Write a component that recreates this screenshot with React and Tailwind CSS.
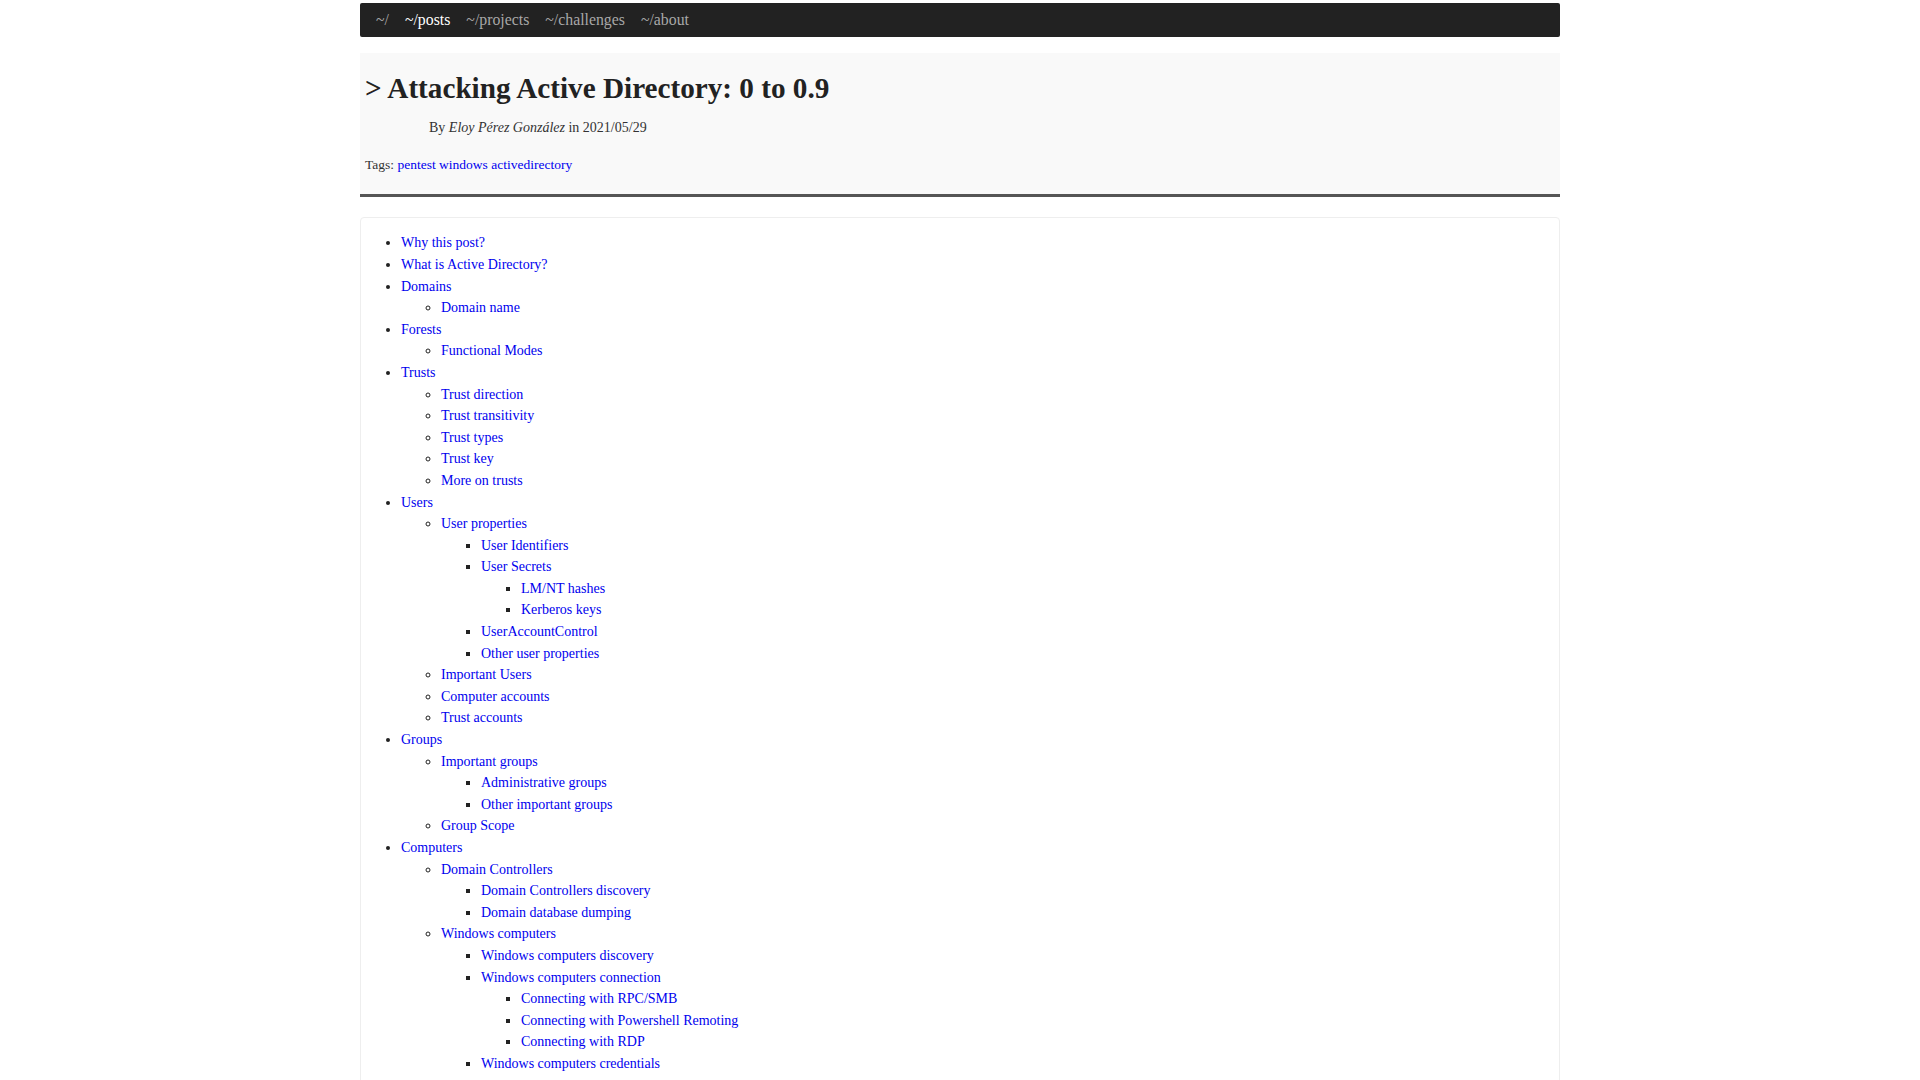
const NAV = [
  { label: '~/', active: false },
  { label: '~/posts', active: true },
  { label: '~/projects', active: false },
  { label: '~/challenges', active: false },
  { label: '~/about', active: false },
];

// table of contents, nested by level
const TOC = [
  { t: 'Why this post?' },
  { t: 'What is Active Directory?' },
  { t: 'Domains', c: [{ t: 'Domain name' }] },
  { t: 'Forests', c: [{ t: 'Functional Modes' }] },
  {
    t: 'Trusts',
    c: [
      { t: 'Trust direction' },
      { t: 'Trust transitivity' },
      { t: 'Trust types' },
      { t: 'Trust key' },
      { t: 'More on trusts' },
    ],
  },
  {
    t: 'Users',
    c: [
      {
        t: 'User properties',
        c: [
          { t: 'User Identifiers' },
          { t: 'User Secrets', c: [{ t: 'LM/NT hashes' }, { t: 'Kerberos keys' }] },
          { t: 'UserAccountControl' },
          { t: 'Other user properties' },
        ],
      },
      { t: 'Important Users' },
      { t: 'Computer accounts' },
      { t: 'Trust accounts' },
    ],
  },
  {
    t: 'Groups',
    c: [
      {
        t: 'Important groups',
        c: [{ t: 'Administrative groups' }, { t: 'Other important groups' }],
      },
      { t: 'Group Scope' },
    ],
  },
  {
    t: 'Computers',
    c: [
      {
        t: 'Domain Controllers',
        c: [{ t: 'Domain Controllers discovery' }, { t: 'Domain database dumping' }],
      },
      {
        t: 'Windows computers',
        c: [
          { t: 'Windows computers discovery' },
          {
            t: 'Windows computers connection',
            c: [
              { t: 'Connecting with RPC/SMB' },
              { t: 'Connecting with Powershell Remoting' },
              { t: 'Connecting with RDP' },
            ],
          },
          { t: 'Windows computers credentials' },
        ],
      },
    ],
  },
];

const BULLETS = ['list-disc', 'list-[circle]', 'list-[square]', 'list-[square]'];

function TocList({ items, level = 0 }) {
  return (
    <ul className={`${BULLETS[Math.min(level, 3)]} pl-10 marker:text-[#222]`}>
      {items.map(item => (
        <li key={item.t}>
          <a href="#" className="text-[#0000ee]">
            {item.t}
          </a>
          {item.c && <TocList items={item.c} level={level + 1} />}
        </li>
      ))}
    </ul>
  );
}

export default function App() {
  return (
    <div className="min-h-screen bg-white font-['Liberation_Serif','Times_New_Roman',serif] text-[#222]">
      <div className="mx-auto w-[1200px] pt-[3px]">
        {/* Nav */}
        <nav className="flex h-[34px] items-center gap-[16px] rounded-[2px] bg-[#222] pl-4 text-[15.8px]">
          {NAV.map(n => (
            <a key={n.label} href="#" className={n.active ? 'text-white' : 'text-[#a8a8a8]'}>
              {n.label}
            </a>
          ))}
        </nav>

        {/* Post header */}
        <header className="mt-4 border-b-[3px] border-[#555] bg-[#f9f9f9] px-[5px] pt-[17px] pb-[20px]">
          <h1 className="text-[29.2px] leading-[36px] font-bold text-[#222]">
            &gt; Attacking Active Directory: 0 to 0.9
          </h1>
          <p className="mt-[12px] pl-[64px] text-[14px] leading-[20px] text-[#333]">
            By <em>Eloy Pérez González</em> in 2021/05/29
          </p>
          <p className="mt-[18px] text-[13.5px] leading-[18px] text-[#333]">
            Tags:{' '}
            <a href="#" className="text-[#0000ee]">pentest</a>{' '}
            <a href="#" className="text-[#0000ee]">windows</a>{' '}
            <a href="#" className="text-[#0000ee]">activedirectory</a>
          </p>
        </header>

        {/* Table of contents */}
        <div className="mt-5 rounded-[4px] border border-[#eee] py-[14.4px] text-[14px] leading-[21.6px]">
          <TocList items={TOC} />
        </div>
      </div>
    </div>
  );
}
